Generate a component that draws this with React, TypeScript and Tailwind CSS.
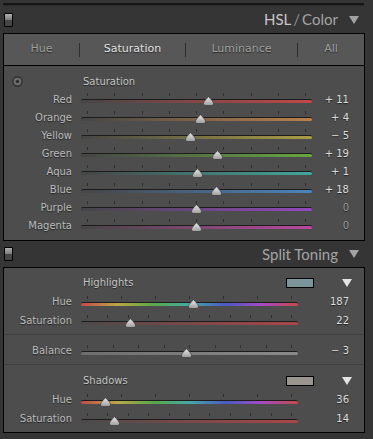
import React from "react";

type SliderRow = {
  label: string;
  value: number;
  text: string;
  track: string;
  dim?: boolean;
};

const hslRows: SliderRow[] = [
  { label: "Red", value: 11, text: "+ 11", track: "bg-[linear-gradient(to_right,#454545,#c24848)]" },
  { label: "Orange", value: 4, text: "+ 4", track: "bg-[linear-gradient(to_right,#454545,#ba804a)]" },
  { label: "Yellow", value: -5, text: "− 5", track: "bg-[linear-gradient(to_right,#454545,#aa9c44)]" },
  { label: "Green", value: 19, text: "+ 19", track: "bg-[linear-gradient(to_right,#454545,#66a640)]" },
  { label: "Aqua", value: 1, text: "+ 1", track: "bg-[linear-gradient(to_right,#454545,#42a69c)]" },
  { label: "Blue", value: 18, text: "+ 18", track: "bg-[linear-gradient(to_right,#454545,#4a84be)]" },
  { label: "Purple", value: 0, text: "0", dim: true, track: "bg-[linear-gradient(to_right,#454545,#9248be)]" },
  { label: "Magenta", value: 0, text: "0", dim: true, track: "bg-[linear-gradient(to_right,#454545,#ba48a0)]" },
];

const hueTrack =
  "bg-[linear-gradient(to_right,#c24a4a,#b8a848,#5aa848,#46a8a8,#4a5ac2,#a64ac0,#c24a4a)]";
const satTrack = "bg-[linear-gradient(to_right,#4a4a4a,#aa4646)]";
const balTrack = "bg-[linear-gradient(to_right,#6e6e6e,#8a8a8a)]";

function Thumb() {
  return (
    <svg width="11" height="10" viewBox="0 0 11 10">
      <defs>
        <linearGradient id="thumbfill" x1="0" y1="0" x2="0" y2="1">
          <stop offset="0" stopColor="#ececec" />
          <stop offset="1" stopColor="#9c9c9c" />
        </linearGradient>
      </defs>
      <path
        d="M5.5 0.5 C6.5 2.2 10.5 5.2 10.5 7.4 C10.5 8.9 9.6 9.5 8 9.5 L3 9.5 C1.4 9.5 0.5 8.9 0.5 7.4 C0.5 5.2 4.5 2.2 5.5 0.5 Z"
        fill="url(#thumbfill)"
        stroke="#2e2e2e"
        strokeWidth="0.6"
      />
    </svg>
  );
}

function Slider({
  width,
  ticks,
  frac,
  track,
}: {
  width: number;
  ticks: number;
  frac: number;
  track: string;
}) {
  const left = 4 + frac * (width - 8) - 5.5;
  return (
    <div className="flex flex-col h-[18px]" style={{ width }}>
      <div className="mt-[3px] h-[3px] px-[6px] flex justify-between">
        {Array.from({ length: ticks }).map((_, i) => (
          <div key={i} className="w-px h-full bg-[#2f2f2f]" />
        ))}
      </div>
      <div className="relative mt-[3px] h-[4px] rounded-full border-t border-[#1c1c1c] bg-[#3a3a3a]">
        <div className={`h-[3px] rounded-full ${track}`} />
        <div className="absolute bottom-[-3px]" style={{ left }}>
          <Thumb />
        </div>
      </div>
    </div>
  );
}

function Toggle() {
  return (
    <div className="w-[9px] h-[14px] border border-black rounded-[1px] flex flex-col overflow-hidden">
      <div className="flex-1 bg-[linear-gradient(to_bottom,#b0b0b0,#7c7c7c)]" />
      <div className="flex-1 bg-[#464646]" />
    </div>
  );
}

function Caret({ color }: { color: string }) {
  return (
    <svg width="10" height="8" viewBox="0 0 10 8">
      <polygon points="0,0 10,0 5,8" fill={color} />
    </svg>
  );
}

function Header({ children }: { children: React.ReactNode }) {
  return (
    <div className="flex items-center h-full pl-[4px] pr-[14px]">
      <Toggle />
      <div className="flex-1" />
      <div className="font-['Lato',sans-serif] text-[15px] text-[#a4a4a4] mr-[11px]">
        {children}
      </div>
      <Caret color="#a2a2a2" />
    </div>
  );
}

const labelCls =
  "font-['DejaVu_Sans',sans-serif] text-[10px] [text-shadow:0_1px_1px_rgba(0,0,0,0.55)]";

function Row({
  label,
  children,
  value,
  dim,
  valueWidth,
}: {
  label: string;
  children: React.ReactNode;
  value: string;
  dim?: boolean;
  valueWidth: number;
}) {
  return (
    <div className="flex items-center h-[18px]">
      <div className={`${labelCls} w-[68px] text-right text-[#bcbcbc] mr-[9px]`}>{label}</div>
      {children}
      <div
        className={`${labelCls} text-right ${dim ? "text-[#9a9a9a]" : "text-[#dedede]"}`}
        style={{ width: valueWidth }}
      >
        {value}
      </div>
    </div>
  );
}

function TargetIcon() {
  return (
    <svg width="11" height="11" viewBox="0 0 11 11">
      <circle cx="5.5" cy="5.5" r="4.6" fill="#6a6a6a" stroke="#262626" strokeWidth="1.1" />
      <circle cx="5.5" cy="5.5" r="1.6" fill="#262626" />
    </svg>
  );
}

function Swatch({ color }: { color: string }) {
  return <div className={`w-[28px] h-[10px] border border-black ${color}`} />;
}

export default function App() {
  const tabs = [
    { name: "Hue", w: "w-[75px]", active: false },
    { name: "Saturation", w: "w-[105px]", active: true },
    { name: "Luminance", w: "w-[111px]", active: false },
    { name: "All", w: "flex-1", active: false },
  ];

  return (
    <div className="w-[373px] h-[439px] bg-[#353535] overflow-hidden">
      {/* end of previous panel */}
      <div className="pt-[3px] h-[6px]">
        <div className="ml-[3px] w-[361px] h-[3px] bg-[#161616] border-b border-[#2a2a2a]" />
      </div>

      {/* HSL / Color */}
      <div className="h-[27px]">
        <Header>
          <span className="text-[#c6c6c6]">HSL</span>
          <span className="text-[#8e8e8e] mx-[2px]">/</span>
          <span>Color</span>
        </Header>
      </div>
      <div className="ml-[3px] w-[362px] h-[208px] border border-black bg-[#4d4d4d] flex flex-col">
        <div className="h-[32px] bg-[#575757] border-b border-black flex items-center">
          {tabs.map((t, i) => (
            <React.Fragment key={t.name}>
              {i > 0 && <div className="w-px h-[14px] bg-[#2e2e2e]" />}
              <div
                className={`${t.w} text-center ${labelCls} text-[11px] ${
                  t.active ? "text-[#e2e2e2]" : "text-[#a0a0a0]"
                }`}
              >
                {t.name}
              </div>
            </React.Fragment>
          ))}
        </div>
        <div className="pt-[6px]">
          <div className="flex items-center h-[18px]">
            <div className="ml-[8px] w-[69px] flex">
              <TargetIcon />
            </div>
            <div className={`${labelCls} ml-[2px] text-[#c4c4c4]`}>Saturation</div>
          </div>
          {hslRows.map((r) => (
            <Row key={r.label} label={r.label} value={r.text} dim={r.dim} valueWidth={37}>
              <Slider width={231} ticks={9} frac={(r.value + 100) / 200} track={r.track} />
            </Row>
          ))}
        </div>
      </div>

      {/* Split Toning */}
      <div className="h-[26px]">
        <Header>Split Toning</Header>
      </div>
      <div className="ml-[3px] w-[362px] h-[166px] border border-black bg-[#4d4d4d] flex flex-col">
        <div className="pt-[5px] pb-[4px]">
          <div className="flex items-center h-[19px]">
            <div className={`${labelCls} ml-[79px] text-[#c4c4c4]`}>Highlights</div>
            <div className="flex-1" />
            <Swatch color="bg-[#7b959a]" />
            <div className="ml-[28px] mr-[12px] flex">
              <Caret color="#e4e4e4" />
            </div>
          </div>
          <div className="h-[19px] flex flex-col justify-center">
            <Row label="Hue" value="187" valueWidth={51}>
              <Slider width={217} ticks={7} frac={187 / 360} track={hueTrack} />
            </Row>
          </div>
          <div className="h-[19px] flex flex-col justify-center">
            <Row label="Saturation" value="22" valueWidth={51}>
              <Slider width={217} ticks={11} frac={0.22} track={satTrack} />
            </Row>
          </div>

          <div className="mt-[4px] border-t border-[#404040] pt-[6px]">
            <div className="h-[19px] flex flex-col justify-center">
              <Row label="Balance" value="− 3" valueWidth={51}>
                <Slider width={217} ticks={9} frac={0.485} track={balTrack} />
              </Row>
            </div>
          </div>

          <div className="mt-[4px] border-t border-[#404040] pt-[6px]">
            <div className="flex items-center h-[19px]">
              <div className={`${labelCls} ml-[79px] text-[#c4c4c4]`}>Shadows</div>
              <div className="flex-1" />
              <Swatch color="bg-[#9a958e]" />
              <div className="ml-[28px] mr-[12px] flex">
                <Caret color="#e4e4e4" />
              </div>
            </div>
            <div className="h-[19px] flex flex-col justify-center">
              <Row label="Hue" value="36" valueWidth={51}>
                <Slider width={217} ticks={7} frac={36 / 360} track={hueTrack} />
              </Row>
            </div>
            <div className="h-[19px] flex flex-col justify-center">
              <Row label="Saturation" value="14" valueWidth={51}>
                <Slider width={217} ticks={11} frac={0.14} track={satTrack} />
              </Row>
            </div>
          </div>
        </div>
      </div>
    </div>
  );
}
